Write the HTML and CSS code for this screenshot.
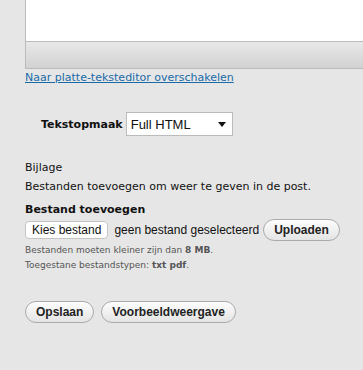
FILE: index.html
```html
<!DOCTYPE html>
<html lang="nl">
<head>
    <meta charset="UTF-8">
    <title>Bericht bewerken</title>
    <link rel="stylesheet" href="styles.css">
</head>
<body>
    <div class="editor">
        <div class="editor-area"></div>
        <div class="editor-bar"></div>
    </div>
    <a class="switch-link" href="#">Naar platte-teksteditor overschakelen</a>

    <div class="format-row">
        <label for="format">Tekstopmaak</label>
        <div class="select-box">
            <span>Full HTML</span>
            <span class="arrow"></span>
        </div>
    </div>

    <div class="attach">
        <div>Bijlage</div>
        <div>Bestanden toevoegen om weer te geven in de post.</div>
    </div>

    <div class="upload">
        <div class="upload-title">Bestand toevoegen</div>
        <div class="upload-row">
            <span class="file-btn">Kies bestand</span>
            <span class="file-name">geen bestand geselecteerd</span>
            <button class="pill">Uploaden</button>
        </div>
        <div class="hint">Bestanden moeten kleiner zijn dan <b>8 MB</b>.</div>
        <div class="hint">Toegestane bestandstypen: <b>txt pdf</b>.</div>
    </div>

    <div class="actions">
        <button class="pill">Opslaan</button>
        <button class="pill">Voorbeeldweergave</button>
    </div>
</body>
</html>
```

FILE: styles.css
```css
body {
    margin: 0;
    padding: 0 0 0 25px;
    background: #e6e6e6;
    font-family: "DejaVu Sans", Verdana, sans-serif;
    font-size: 11px;
    color: #111;
}

.editor {
    margin-right: -10px;
    border-left: 1px solid #bbb;
    border-bottom: 1px solid #bbb;
}

.editor-area {
    height: 41px;
    background: #fff;
    border-bottom: 1px solid #bbb;
}

.editor-bar {
    height: 26px;
    background: linear-gradient(#e8e8e8, #d2d2d2);
}

.switch-link {
    display: block;
    margin-top: 2px;
    color: #1a6aa8;
    font-size: 11px;
}

.format-row {
    display: flex;
    align-items: center;
    gap: 3px;
    margin: 28px 0 0 16px;
}

.format-row label {
    font-weight: bold;
}

.select-box {
    display: flex;
    align-items: center;
    justify-content: space-between;
    width: 95px;
    height: 22px;
    padding: 0 6px 0 4px;
    background: #fff;
    border: 1px solid #bbb;
    font-family: "Liberation Sans", Arial, sans-serif;
    font-size: 13px;
}

.arrow {
    width: 0;
    height: 0;
    border-left: 4px solid transparent;
    border-right: 4px solid transparent;
    border-top: 5px solid #111;
}

.attach {
    margin-top: 22px;
    line-height: 19px;
}

.upload {
    margin-top: 6px;
}

.upload-title {
    font-weight: bold;
    line-height: 16px;
}

.upload-row {
    display: flex;
    align-items: center;
    margin-top: 1px;
    font-family: "Liberation Sans", Arial, sans-serif;
    font-size: 12px;
}

.file-btn {
    padding: 1px 6px;
    background: #fff;
    border: 1px solid #c4c4c4;
    border-radius: 4px;
}

.file-name {
    margin: 0 4px 0 6px;
}

.pill {
    height: 22px;
    padding: 0 10px;
    border: 1px solid #aaa;
    border-radius: 11px;
    background: linear-gradient(#fdfdfd, #e4e4e4);
    font-family: "Liberation Sans", Arial, sans-serif;
    font-size: 12px;
    font-weight: bold;
    color: #222;
}

.hint {
    margin-top: 3px;
    font-size: 9px;
    color: #555;
    line-height: 12px;
}

.hint:first-of-type {
    margin-top: 1px;
}

.actions {
    display: flex;
    gap: 7px;
    margin-top: 30px;
}
```
